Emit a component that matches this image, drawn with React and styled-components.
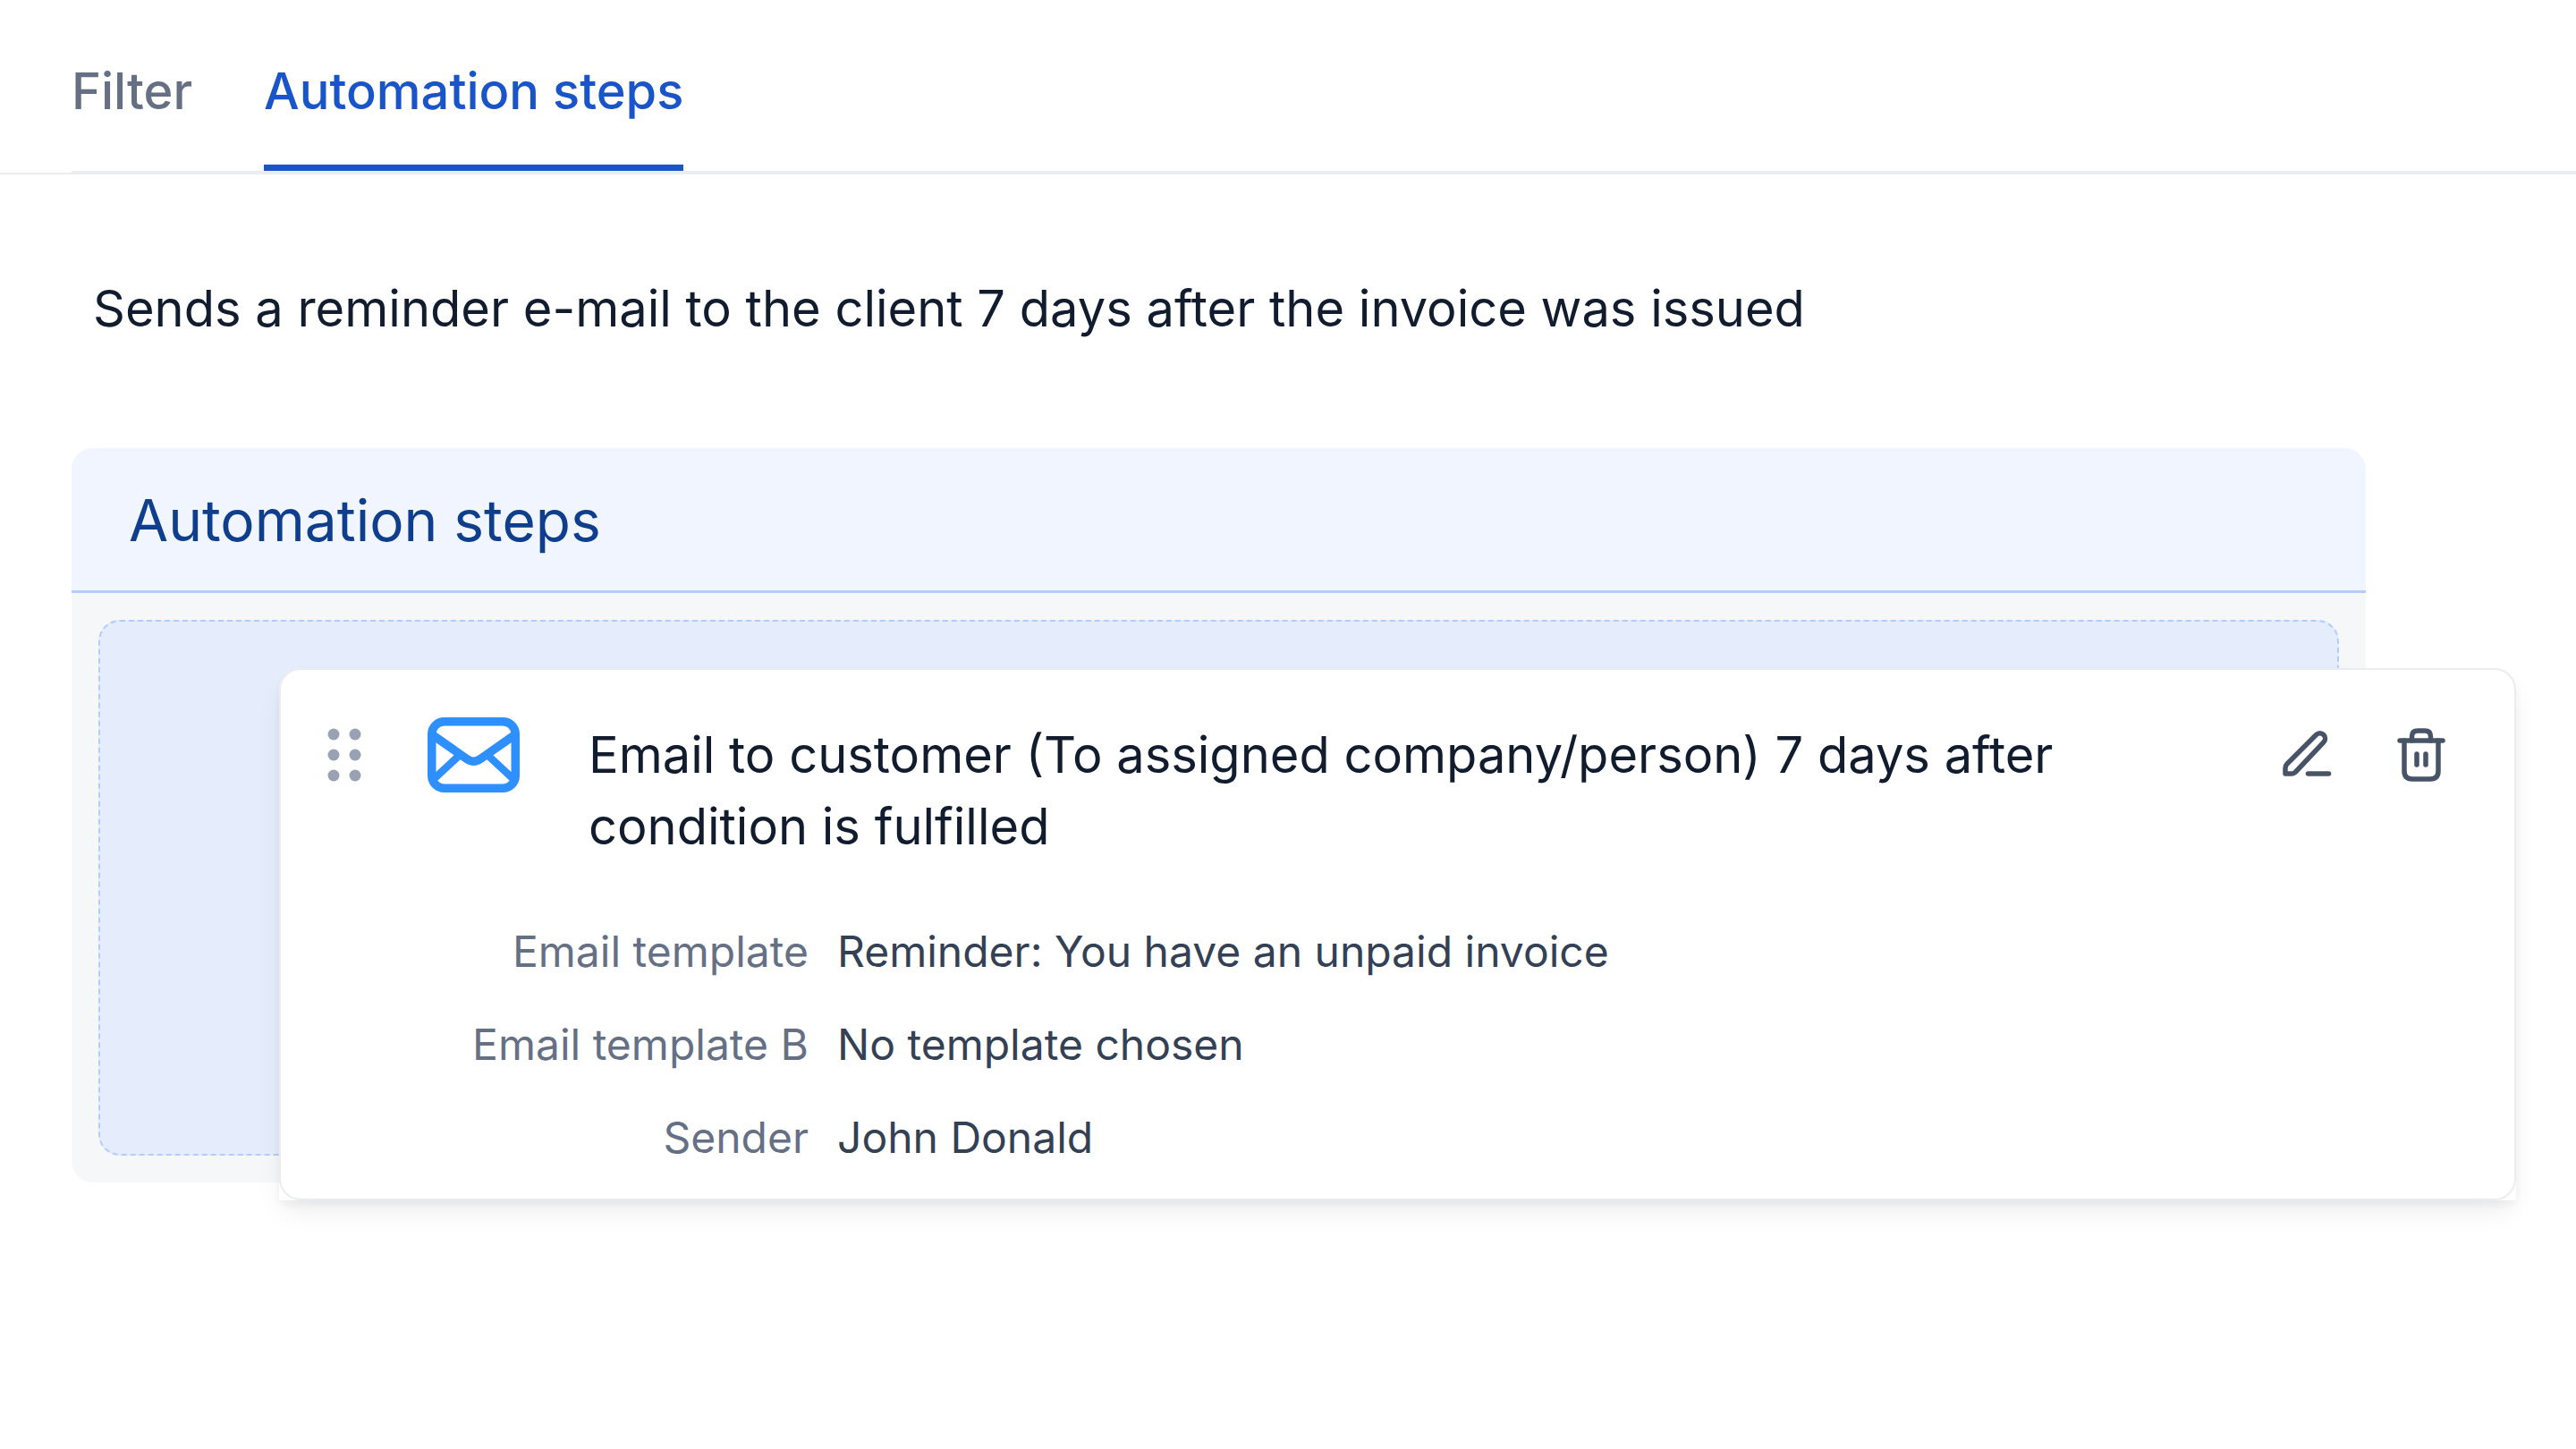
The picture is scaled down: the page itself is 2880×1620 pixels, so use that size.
import React from "react";
import styled, { createGlobalStyle } from "styled-components";

const GlobalStyle = createGlobalStyle`
  *, *::before, *::after { box-sizing: border-box; }
  body {
    margin: 0;
    background: #fff;
    color: #111c2e;
    font-family: Inter, "Liberation Sans", sans-serif;
    font-optical-sizing: none;
    font-size: 56px;
    line-height: 80px;
  }
`;

const TabBar = styled.header`
  padding-left: 80px;
  border-bottom: 2px solid #eaecf0;
`;

const TabList = styled.div`
  display: flex;
  gap: 80px;
  margin-bottom: -1px;
  border-bottom: 3px solid #eaecf0;
`;

const Tab = styled.button`
  padding: 62px 0 42px;
  border: 0;
  border-bottom: 7px solid ${({ $active }) => ($active ? "#1955c8" : "transparent")};
  background: none;
  color: ${({ $active }) => ($active ? "#1955c8" : "#667085")};
  font: inherit;
  font-weight: 500;
  cursor: pointer;
`;

const Content = styled.main`
  padding: 110px 235px 80px 80px;
`;

const Description = styled.p`
  margin: 0 0 116px;
  padding-left: 24px;
`;

const Panel = styled.section`
  border-radius: 24px;
  background: #f5f7f9;
`;

const PanelTitle = styled.h2`
  margin: 0;
  padding: 41px 64px 38px;
  border-bottom: 3px solid #b2ccff;
  border-radius: 24px 24px 0 0;
  background: #f0f5ff;
  color: #0f3e8c;
  font-size: 64px;
  font-weight: 400;
  line-height: 80px;
`;

const StepList = styled.div`
  padding: 30px;
`;

const DropZone = styled.div`
  border: 2px dashed #b2ccff;
  border-radius: 24px;
  background: #e5edfd;
`;

const DraggedStep = styled.div`
  transform: translate(200px, 52px);
  border-radius: 24px 24px 0 0;
  background: #fff;
  box-shadow: 0 16px 32px -6px rgba(16, 24, 40, 0.08), 0 6px 12px -2px rgba(16, 24, 40, 0.06);
`;

const Card = styled.article`
  padding: 55px 72px 28px 52px;
  border: 2px solid #eaecf0;
  border-radius: 24px;
  background: #fff;
`;

const CardHeader = styled.div`
  display: flex;
  align-items: flex-start;
`;

const IconSlot = styled.span`
  display: flex;
  flex: none;
  align-items: center;
  width: ${({ $width }) => $width}px;
  height: 80px;
`;

const IconButton = styled.button`
  display: flex;
  flex: none;
  align-items: center;
  justify-content: center;
  width: 64px;
  height: 80px;
  padding: 0;
  border: 0;
  background: none;
  color: #475467;
  cursor: pointer;
`;

const CardTitle = styled.h3`
  flex: 1;
  margin: 0;
  padding-right: 160px;
  font-size: 56px;
  font-weight: 400;
`;

const Actions = styled.div`
  display: flex;
  gap: 64px;
`;

const Details = styled.dl`
  display: grid;
  grid-template-columns: 538px 1fr;
  gap: 24px 32px;
  margin: 60px 0 0;
  font-size: 48px;
`;

const Label = styled.dt`
  color: #667085;
  text-align: right;
`;

const Value = styled.dd`
  margin: 0;
  color: #344054;
`;

const details = [
  ["Email template", "Reminder: You have an unpaid invoice"],
  ["Email template B", "No template chosen"],
  ["Sender", "John Donald"],
];

const DragIcon = () => (
  <svg width="38" height="60" viewBox="0 0 38 60" fill="#98a2b3" aria-hidden="true">
    {[7, 30, 53].map((y) => (
      <g key={y}>
        <circle cx="7" cy={y} r="6.5" />
        <circle cx="31" cy={y} r="6.5" />
      </g>
    ))}
  </svg>
);

const EnvelopeIcon = () => (
  <svg width="103" height="84" viewBox="0 0 103 84" fill="none" stroke="#2e90ff" strokeWidth="9.5" aria-hidden="true">
    <rect x="4.75" y="4.75" width="93.5" height="74.5" rx="14" />
    <path d="M6 20 L44 46.500 Q51.500 52 59 46.500 L97 20" />
    <path d="M35 43 L7 69 M68 43 L96 69" strokeWidth="8.500" />
  </svg>
);

const EditIcon = () => (
  <svg width="56" height="56" viewBox="0 0 56 56" fill="none" stroke="currentColor" strokeWidth="5.500" strokeLinecap="round" strokeLinejoin="round" aria-hidden="true">
    <path d="M4 43 C4 41 4.500 39.500 6 38 L38.500 5.500 C40.800 3.200 44.500 3.200 46.800 5.500 C49.100 7.800 49.100 11.500 46.800 13.800 L16 46.500 C14.500 48.200 13 49 11 49 H4 Z" />
    <path d="M29.500 49 H52.500" />
  </svg>
);

const TrashIcon = () => (
  <svg width="54" height="62" viewBox="0 0 54 62" fill="none" stroke="currentColor" strokeWidth="5.500" strokeLinecap="round" strokeLinejoin="round" aria-hidden="true">
    <path d="M3 15 H51" />
    <path d="M16.500 15 V10.500 Q16.500 4 23 4 H31 Q37.500 4 37.500 10.500 V15" />
    <path d="M8 15 V49 Q8 58 17 58 H37 Q46 58 46 49 V15" />
    <path d="M22 30 V42 M32 30 V42" />
  </svg>
);

export default function App() {
  return (
    <>
      <GlobalStyle />
      <TabBar>
        <TabList role="tablist">
          <Tab role="tab" aria-selected="false">Filter</Tab>
          <Tab role="tab" aria-selected="true" $active>Automation steps</Tab>
        </TabList>
      </TabBar>
      <Content>
        <Description>
          Sends a reminder e-mail to the client 7 days after the invoice was issued
        </Description>
        <Panel>
          <PanelTitle>Automation steps</PanelTitle>
          <StepList>
            <DropZone>
              <DraggedStep>
                <Card>
                  <CardHeader>
                    <IconSlot $width={112}><DragIcon /></IconSlot>
                    <IconSlot $width={180}><EnvelopeIcon /></IconSlot>
                    <CardTitle>
                      Email to customer (To assigned company/person) 7 days after condition is fulfilled
                    </CardTitle>
                    <Actions>
                      <IconButton aria-label="Edit step"><EditIcon /></IconButton>
                      <IconButton aria-label="Delete step"><TrashIcon /></IconButton>
                    </Actions>
                  </CardHeader>
                  <Details>
                    {details.map(([label, value]) => (
                      <React.Fragment key={label}>
                        <Label>{label}</Label>
                        <Value>{value}</Value>
                      </React.Fragment>
                    ))}
                  </Details>
                </Card>
              </DraggedStep>
            </DropZone>
          </StepList>
        </Panel>
      </Content>
    </>
  );
}
